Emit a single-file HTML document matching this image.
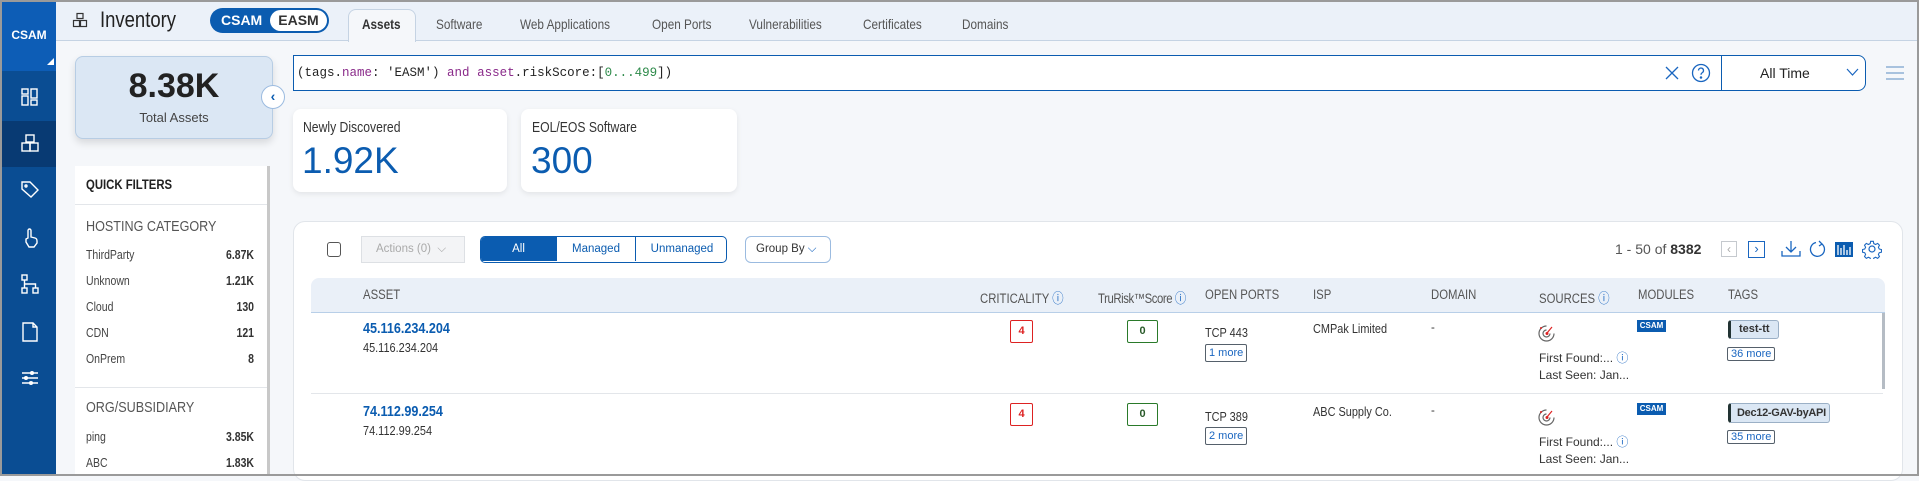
<!DOCTYPE html>
<html><head><meta charset="utf-8"><style>
*{box-sizing:border-box;margin:0;padding:0}
body{width:1919px;height:476px;overflow:hidden;background:#f5f7fa;font-family:"Liberation Sans",sans-serif;color:#333;position:relative}
.a{position:absolute;white-space:nowrap}
.n{transform:scaleX(.84);transform-origin:0 50%}
.side{left:0;top:0;width:56px;height:476px;background:#0a4d93;border-left:2px solid #9a9a9a}
.ic{position:absolute;left:17px;width:22px;height:22px}
.hdr{left:56px;top:0;width:1863px;height:41px;background:#ebf1f9;border-bottom:1px solid #c5d3e3}
.tab{top:16px;font-size:14px;color:#555}
.qf{font-size:12.5px;color:#444}
.qv{font-size:12.5px;color:#333;font-weight:bold;text-align:right;width:70px;transform-origin:100% 50%}
.th{top:287px;font-size:13.5px;color:#555}
.box{border:1px solid;font-size:11px;font-weight:bold;text-align:center;line-height:21px;border-radius:2px}
.more{border:1px solid #55606b;color:#1a66c0;font-size:11px;line-height:16px;padding:0 3px;border-radius:2px}
</style></head><body>
<div class="a" style="left:0;top:0;width:1919px;height:476px;border:2px solid #9a9a9a;border-left:none;z-index:50;pointer-events:none"></div>
<div class="a side">
 <div class="a" style="left:0;top:0;width:54px;height:71px;background:#0d5db6"></div>
 <div class="a" style="left:0;top:28px;width:54px;text-align:center;color:#fff;font-weight:bold;font-size:12px">CSAM</div>
 <div class="a" style="left:45px;top:58px;width:0;height:0;border-left:7px solid transparent;border-bottom:7px solid #fff"></div>
 <div class="a" style="left:0;top:121px;width:54px;height:46px;background:#083a73"></div>
 <svg class="ic" style="top:86px" viewBox="0 0 22 22" fill="none" stroke="#fff" stroke-width="1.4"><rect x="3" y="3" width="6" height="5"/><rect x="3" y="10" width="6" height="9"/><rect x="12" y="3" width="6" height="9"/><rect x="12" y="14" width="6" height="5"/></svg>
 <svg class="ic" style="top:132px" viewBox="0 0 22 22" fill="none" stroke="#fff" stroke-width="1.4"><rect x="7" y="3" width="8" height="7"/><rect x="3" y="11" width="8" height="8"/><rect x="11" y="11" width="8" height="8"/></svg>
 <svg class="ic" style="top:179px" viewBox="0 0 22 22" fill="none" stroke="#fff" stroke-width="1.4"><path d="M3 3h8l8 8-7 7-9-8z"/><circle cx="7" cy="7" r="1"/></svg>
 <svg class="ic" style="top:227px" viewBox="0 0 22 22" fill="none" stroke="#fff" stroke-width="1.4"><path d="M9 11V3.5a1.5 1.5 0 013 0V10l4 1c2 .5 2 2 2 3v2l-3 4H10l-3-5v-3z"/></svg>
 <svg class="ic" style="top:273px" viewBox="0 0 22 22" fill="none" stroke="#fff" stroke-width="1.4"><rect x="3" y="2" width="5" height="5"/><rect x="3" y="15" width="5" height="5"/><rect x="14" y="15" width="5" height="5"/><path d="M5.5 7v8M5.5 11h11v4"/></svg>
 <svg class="ic" style="top:321px" viewBox="0 0 22 22" fill="none" stroke="#fff" stroke-width="1.4"><path d="M4 2h10l4 4v14H4z"/><path d="M14 2v4h4"/></svg>
 <svg class="ic" style="top:367px" viewBox="0 0 22 22" fill="none" stroke="#fff" stroke-width="1.5"><path d="M3 6h16M3 11h16M3 16h16"/><circle cx="13" cy="6" r="1.3" fill="#fff"/><circle cx="7" cy="11" r="1.3" fill="#fff"/><circle cx="12" cy="16" r="1.3" fill="#fff"/></svg>
</div>
<div class="a hdr"></div>
<svg class="a" style="left:72px;top:12px;width:16px;height:16px" viewBox="0 0 16 16" fill="none" stroke="#333" stroke-width="1.2"><rect x="5" y="1.5" width="6" height="5"/><rect x="1.5" y="8.5" width="6" height="6"/><rect x="8.5" y="8.5" width="6" height="6"/></svg>
<div class="a n" style="left:100px;top:7px;font-size:22px;color:#222">Inventory</div>
<div class="a" style="left:210px;top:8px;width:119px;height:25px;border-radius:13px;background:#0b5cb0"></div>
<div class="a" style="left:221px;top:12px;color:#fff;font-size:14px;font-weight:bold" >CSAM</div>
<div class="a" style="left:270px;top:10px;width:57px;height:21px;border-radius:11px;background:#fff;color:#333;font-size:14px;font-weight:bold;text-align:center;line-height:21px">EASM</div>
<div class="a" style="left:348px;top:9px;width:68px;height:33px;background:#f5f7fa;border:1px solid #c5d3e3;border-bottom:none;border-radius:8px 8px 0 0"></div>
<div class="a tab n" style="left:362px;color:#333;font-weight:bold">Assets</div>
<div class="a tab n" style="left:436px">Software</div>
<div class="a tab n" style="left:520px">Web Applications</div>
<div class="a tab n" style="left:652px">Open Ports</div>
<div class="a tab n" style="left:749px">Vulnerabilities</div>
<div class="a tab n" style="left:863px">Certificates</div>
<div class="a tab n" style="left:962px">Domains</div>

<div class="a" style="left:75px;top:56px;width:198px;height:83px;background:#dbe7f4;border:1px solid #b7cde4;border-radius:8px;box-shadow:0 4px 8px rgba(0,0,0,.12)"></div>
<div class="a" style="left:75px;top:67px;width:198px;text-align:center;font-size:34px;font-weight:bold;color:#222">8.38K</div>
<div class="a" style="left:75px;top:110px;width:198px;text-align:center;font-size:13px;color:#444">Total Assets</div>
<div class="a" style="left:261px;top:85px;width:24px;height:24px;border-radius:50%;background:#fff;border:1px solid #9bbbe0;text-align:center;line-height:21px;color:#0b5cb0;font-size:14px;font-weight:bold">‹</div>

<div class="a" style="left:75px;top:166px;width:195px;height:310px;background:#fff;border-right:3px solid #c8c8c8"></div>
<div class="a" style="left:75px;top:204px;width:192px;height:1px;background:#e3e6ea"></div>
<div class="a" style="left:75px;top:387px;width:192px;height:1px;background:#e3e6ea"></div>
<div class="a n" style="left:86px;top:177px;font-size:13.5px;font-weight:bold;color:#222">QUICK FILTERS</div>
<div class="a n" style="left:86px;top:218px;font-size:15px;color:#555">HOSTING CATEGORY</div>
<div class="a n" style="left:86px;top:399px;font-size:15px;color:#555">ORG/SUBSIDIARY</div>
<div class="a qf n" style="left:86px;top:248px">ThirdParty</div><div class="a qv n" style="left:184px;top:248px">6.87K</div>
<div class="a qf n" style="left:86px;top:274px">Unknown</div><div class="a qv n" style="left:184px;top:274px">1.21K</div>
<div class="a qf n" style="left:86px;top:300px">Cloud</div><div class="a qv n" style="left:184px;top:300px">130</div>
<div class="a qf n" style="left:86px;top:326px">CDN</div><div class="a qv n" style="left:184px;top:326px">121</div>
<div class="a qf n" style="left:86px;top:352px">OnPrem</div><div class="a qv n" style="left:184px;top:352px">8</div>
<div class="a qf n" style="left:86px;top:430px">ping</div><div class="a qv n" style="left:184px;top:430px">3.85K</div>
<div class="a qf n" style="left:86px;top:456px">ABC</div><div class="a qv n" style="left:184px;top:456px">1.83K</div>

<div class="a" style="left:293px;top:55px;width:1573px;height:36px;background:#fff;border:1.5px solid #0b5cb0;border-radius:0 8px 8px 0"></div>
<div class="a" style="left:1721px;top:55px;width:1px;height:36px;background:#0b5cb0"></div>
<div class="a" style="left:297px;top:66px;font-family:'Liberation Mono',monospace;font-size:12.5px;color:#222">(tags.<span style="color:#8a2a8a">name</span>: 'EASM') <span style="color:#8a2a8a">and</span> <span style="color:#8a2a8a">asset</span>.riskScore:[<span style="color:#2d8a4a">0...499</span>])</div>
<svg class="a" style="left:1664px;top:65px;width:16px;height:16px" viewBox="0 0 16 16" stroke="#1a66c0" stroke-width="1.3"><path d="M2 2l12 12M14 2L2 14"/></svg>
<svg class="a" style="left:1691px;top:63px;width:20px;height:20px" viewBox="0 0 20 20" fill="none" stroke="#1a66c0" stroke-width="1.3"><circle cx="10" cy="10" r="8.5"/><path d="M7.5 7.5a2.5 2.5 0 114 2c-1 .6-1.5 1-1.5 2.2"/><circle cx="10" cy="14.5" r=".6" fill="#1a66c0"/></svg>
<div class="a" style="left:1760px;top:65px;font-size:14px;color:#222">All Time</div>
<svg class="a" style="left:1846px;top:68px;width:13px;height:9px" viewBox="0 0 13 9" fill="none" stroke="#1a66c0" stroke-width="1.2"><path d="M1 1l5.5 6L12 1"/></svg>
<svg class="a" style="left:1885px;top:65px;width:20px;height:16px" viewBox="0 0 20 16" stroke="#8fb0d5" stroke-width="1.6"><path d="M1 2h18M1 8h18M1 14h18"/></svg>

<div class="a" style="left:293px;top:109px;width:214px;height:83px;background:#fff;border-radius:8px;box-shadow:0 2px 6px rgba(0,0,0,.08)"></div>
<div class="a n" style="left:303px;top:120px;font-size:14.5px;color:#333">Newly Discovered</div>
<div class="a" style="left:302px;top:140px;font-size:37px;color:#0b5cb0">1.92K</div>
<div class="a" style="left:521px;top:109px;width:216px;height:83px;background:#fff;border-radius:8px;box-shadow:0 2px 6px rgba(0,0,0,.08)"></div>
<div class="a n" style="left:532px;top:120px;font-size:14.5px;color:#333">EOL/EOS Software</div>
<div class="a" style="left:531px;top:140px;font-size:37px;color:#0b5cb0">300</div>

<div class="a" style="left:293px;top:221px;width:1610px;height:260px;background:#fff;border:1px solid #e1e5ea;border-radius:12px"></div>
<div class="a" style="left:327px;top:242px;width:14px;height:15px;border:1.3px solid #555;border-radius:3px"></div>
<div class="a" style="left:361px;top:236px;width:104px;height:27px;background:#f3f4f6;border:1px solid #dde0e4;font-size:11.5px;color:#aaa;line-height:25px;padding-left:14px">Actions (0) &nbsp;⌵</div>
<div class="a" style="left:480px;top:236px;width:247px;height:27px;border:1.5px solid #0b5cb0;border-radius:5px;overflow:hidden;background:#fff">
 <div class="a" style="left:0;top:0;width:75px;height:24px;background:#0b5cb0;color:#fff;font-size:11.5px;text-align:center;line-height:24px">All</div>
 <div class="a" style="left:75px;top:0;width:79px;height:24px;border-left:1px solid #0b5cb0;color:#0b5cb0;font-size:11.5px;text-align:center;line-height:24px">Managed</div>
 <div class="a" style="left:154px;top:0;width:93px;height:24px;border-left:1px solid #0b5cb0;color:#0b5cb0;font-size:11.5px;text-align:center;line-height:24px">Unmanaged</div>
</div>
<div class="a" style="left:745px;top:236px;width:86px;height:27px;border:1px solid #9bbbe0;border-radius:6px;font-size:11.5px;color:#333;line-height:25px;padding-left:10px">Group By <span style="color:#1a66c0">⌵</span></div>
<div class="a" style="left:1615px;top:241px;font-size:14px;color:#555">1 - 50 of <b style="color:#333">8382</b></div>
<div class="a" style="left:1721px;top:241px;width:16px;height:16px;border:1px solid #c5c9ce;color:#aaa;font-size:12px;text-align:center;line-height:14px">‹</div>
<div class="a" style="left:1748px;top:241px;width:17px;height:17px;border:1.3px solid #1a66c0;color:#1a66c0;font-size:13px;text-align:center;line-height:14px">›</div>
<svg class="a" style="left:1781px;top:240px;width:20px;height:18px" viewBox="0 0 20 18" fill="none" stroke="#1a66c0" stroke-width="1.3"><path d="M10 1v11M5 7l5 5 5-5M1 11v5h18v-5"/></svg>
<svg class="a" style="left:1809px;top:240px;width:18px;height:19px" viewBox="0 0 18 19" fill="none" stroke="#1a66c0" stroke-width="1.3"><path d="M13 4a7 7 0 11-6-1.5"/><path d="M10 1l3 3-3 2"/></svg>
<div class="a" style="left:1835px;top:242px;width:18px;height:15px;background:#0b5cb0"></div>
<svg class="a" style="left:1835px;top:242px;width:18px;height:15px" viewBox="0 0 18 15" stroke="#fff" stroke-width="1.3" fill="none"><path d="M3 3v10M6 6v7M9 3v10M12 8v5M15 5v8"/></svg>
<svg class="a" style="left:1862px;top:239px;width:20px;height:20px" viewBox="0 0 20 20" fill="none" stroke="#1a66c0" stroke-width="1.2"><circle cx="10" cy="10" r="3"/><path d="M8.5 1.5h3l.5 2.5 2 1 2.3-1.2 2 2-1.2 2.3 1 2 2.4.5v3l-2.4.5-1 2 1.2 2.3-2 2-2.3-1.2-2 1-.5 2.4h-3l-.5-2.4-2-1-2.3 1.2-2-2 1.2-2.3-1-2-2.4-.5v-3l2.4-.5 1-2-1.2-2.3 2-2 2.3 1.2 2-1z" transform="scale(.9) translate(1.1 1.1)"/></svg>

<div class="a" style="left:311px;top:278px;width:1574px;height:35px;background:#eaf0f8;border-bottom:1.5px solid #b8cfe8;border-radius:8px 8px 0 0"></div>
<div class="a th n" style="left:363px">ASSET</div>
<div class="a th n" style="left:980px">CRITICALITY <span style="color:#1a66c0">ⓘ</span></div>
<div class="a th n" style="left:1098px;letter-spacing:-.5px">TruRisk™Score <span style="color:#1a66c0">ⓘ</span></div>
<div class="a th n" style="left:1205px">OPEN PORTS</div>
<div class="a th n" style="left:1313px">ISP</div>
<div class="a th n" style="left:1431px">DOMAIN</div>
<div class="a th n" style="left:1539px">SOURCES <span style="color:#1a66c0">ⓘ</span></div>
<div class="a th n" style="left:1638px">MODULES</div>
<div class="a th n" style="left:1728px">TAGS</div>
<div class="a" style="left:311px;top:393px;width:1572px;height:1px;background:#e3e6ea"></div>
<div class="a" style="left:1882px;top:313px;width:3px;height:76px;background:#b5bcc4"></div>

<!-- row 1 -->
<div class="a n" style="left:363px;top:320px;font-size:15px;font-weight:bold;color:#0b5cb0">45.116.234.204</div>
<div class="a n" style="left:363px;top:340px;font-size:13px;color:#333">45.116.234.204</div>
<div class="a box" style="left:1010px;top:320px;width:23px;height:23px;border-color:#d22;color:#d22">4</div>
<div class="a box" style="left:1127px;top:320px;width:31px;height:23px;border-color:#2a7a2a;color:#2a5a2a">0</div>
<div class="a n" style="left:1205px;top:325px;font-size:13px;color:#333">TCP 443</div>
<div class="a more" style="left:1205px;top:344px">1 more</div>
<div class="a n" style="left:1313px;top:321px;font-size:13px;color:#333">CMPak Limited</div>
<div class="a" style="left:1431px;top:322px;font-size:11.5px">-</div>
<svg class="a" style="left:1537px;top:324px;width:19px;height:19px" viewBox="0 0 19 19" fill="none" stroke="#666" stroke-width="1.2"><path d="M9.5 2a7.5 7.5 0 107.5 7.5"/><path d="M9.5 6a3.5 3.5 0 103.5 3.5"/><path d="M10 9l5-6" stroke="#d22"/><circle cx="10" cy="9.5" r="1.5" fill="#d22" stroke="none"/><circle cx="4" cy="4" r="1" fill="#d22" stroke="none"/></svg>
<div class="a" style="left:1539px;top:349px;font-size:12px;color:#333">First Found:... <span style="color:#1a66c0">ⓘ</span></div>
<div class="a" style="left:1539px;top:368px;font-size:12px;color:#333">Last Seen: Jan...</div>
<div class="a" style="left:1637px;top:320px;width:29px;height:12px;background:#0b5cb0;color:#fff;font-size:8px;font-weight:bold;text-align:center;line-height:12px">CSAM</div>
<div class="a" style="left:1728px;top:320px;width:51px;height:19px;background:#dbe7f4;border:1px solid #9bb0c6;border-left:3px solid #233;border-radius:3px;font-size:11px;font-weight:bold;color:#333;line-height:17px;padding-left:8px">test-tt</div>
<div class="a more" style="left:1727px;top:347px;line-height:12px">36 more</div>

<!-- row 2 -->
<div class="a n" style="left:363px;top:403px;font-size:15px;font-weight:bold;color:#0b5cb0">74.112.99.254</div>
<div class="a n" style="left:363px;top:423px;font-size:13px;color:#333">74.112.99.254</div>
<div class="a box" style="left:1010px;top:403px;width:23px;height:23px;border-color:#d22;color:#d22">4</div>
<div class="a box" style="left:1127px;top:403px;width:31px;height:23px;border-color:#2a7a2a;color:#2a5a2a">0</div>
<div class="a n" style="left:1205px;top:409px;font-size:13px;color:#333">TCP 389</div>
<div class="a more" style="left:1205px;top:427px">2 more</div>
<div class="a n" style="left:1313px;top:404px;font-size:13px;color:#333">ABC Supply Co.</div>
<div class="a" style="left:1431px;top:405px;font-size:11.5px">-</div>
<svg class="a" style="left:1537px;top:408px;width:19px;height:19px" viewBox="0 0 19 19" fill="none" stroke="#666" stroke-width="1.2"><path d="M9.5 2a7.5 7.5 0 107.5 7.5"/><path d="M9.5 6a3.5 3.5 0 103.5 3.5"/><path d="M10 9l5-6" stroke="#d22"/><circle cx="10" cy="9.5" r="1.5" fill="#d22" stroke="none"/><circle cx="4" cy="4" r="1" fill="#d22" stroke="none"/></svg>
<div class="a" style="left:1539px;top:433px;font-size:12px;color:#333">First Found:... <span style="color:#1a66c0">ⓘ</span></div>
<div class="a" style="left:1539px;top:452px;font-size:12px;color:#333">Last Seen: Jan...</div>
<div class="a" style="left:1637px;top:403px;width:29px;height:12px;background:#0b5cb0;color:#fff;font-size:8px;font-weight:bold;text-align:center;line-height:12px">CSAM</div>
<div class="a" style="left:1728px;top:403px;width:102px;height:20px;background:#dbe7f4;border:1px solid #9bb0c6;border-left:3px solid #233;border-radius:3px;font-size:11px;font-weight:bold;color:#333;line-height:18px;padding-left:6px;letter-spacing:-.3px;overflow:hidden">Dec12-GAV-byAPI</div>
<div class="a more" style="left:1727px;top:430px;line-height:12px">35 more</div>
</body></html>
